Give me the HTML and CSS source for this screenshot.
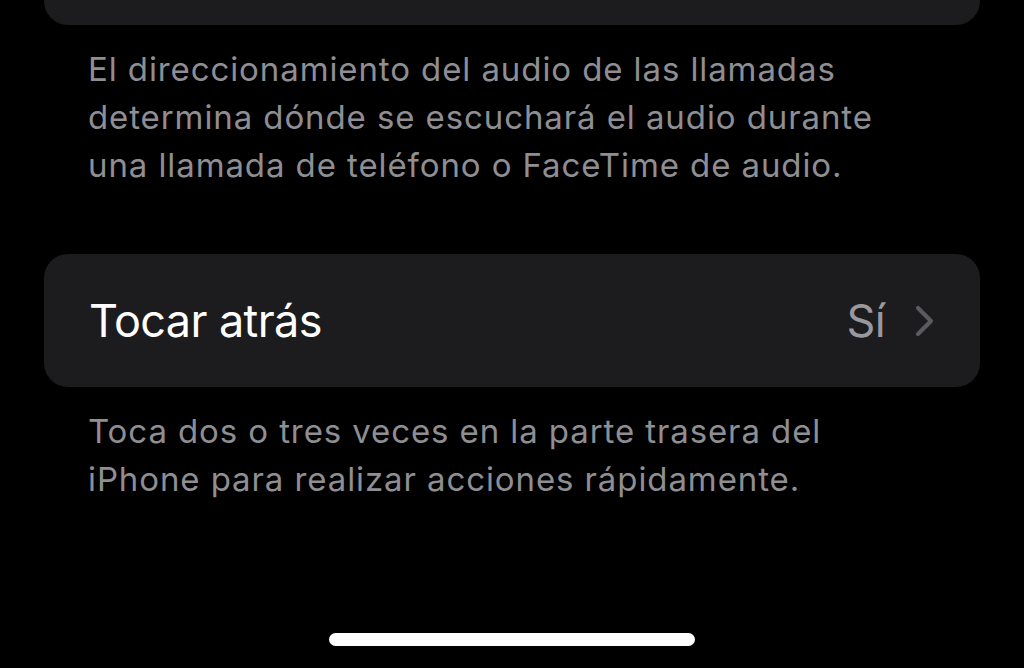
FILE: index.html
```html
<!DOCTYPE html>
<html lang="es">
<head>
    <meta charset="UTF-8">
    <meta name="viewport" content="width=device-width, initial-scale=1.0">
    <title>Tocar atrás</title>
    <link rel="stylesheet" href="styles.css">
</head>
<body>
    <div class="screen">
        <!-- bottom edge of the group above, scrolled out of view -->
        <div class="group group-scrolled"></div>
        <p class="group-footer">El direccionamiento del audio de las llamadas determina dónde se escuchará el audio durante una llamada de teléfono o FaceTime de audio.</p>

        <div class="group">
            <div class="row">
                <span class="row-title">Tocar atrás</span>
                <span class="row-value">Sí</span>
                <svg class="chevron" width="20" height="32" viewBox="0 0 20 32">
                    <path d="M3 3 L16 16 L3 29" fill="none" stroke="currentColor" stroke-width="4.2" stroke-linecap="round" stroke-linejoin="round"/>
                </svg>
            </div>
        </div>
        <p class="group-footer">Toca dos o tres veces en la parte trasera del iPhone para realizar acciones rápidamente.</p>
    </div>

    <div class="home-indicator"></div>
</body>
</html>
```

FILE: styles.css
```css
:root {
    --bg-color: #000000;
    --card-bg-color: #1c1c1e;
    --text-color: #ffffff;
    --secondary-text: #8e8e93;
    --value-color: #98989e;
    --chevron-color: #5a5a5f;
}

body {
    margin: 0;
    height: 668px;
    overflow: hidden;
    background-color: var(--bg-color);
    color: var(--text-color);
    font-family: Inter, "Noto Sans", sans-serif;
    position: relative;
}

.screen {
    padding: 0 44px;
}

.group {
    background-color: var(--card-bg-color);
    border-radius: 24px;
    overflow: hidden;
}

.group-scrolled {
    height: 25px;
    border-radius: 0 0 24px 24px;
}

.row {
    height: 133px;
    display: flex;
    align-items: center;
    padding: 0 45px;
    font-size: 45px;
    letter-spacing: -0.6px;
}

.row-title {
    flex: 1;
}

.row-value {
    color: var(--value-color);
}

.chevron {
    color: var(--chevron-color);
    margin-left: 30px;
}

.group-footer {
    margin: 0 0 65px;
    padding: 20px 80px 0 44px;
    font-size: 33px;
    line-height: 48px;
    letter-spacing: 0.9px;
    color: var(--secondary-text);
}

.home-indicator {
    position: absolute;
    left: 329px;
    top: 633px;
    width: 366px;
    height: 13px;
    border-radius: 7px;
    background-color: #ffffff;
}
```
